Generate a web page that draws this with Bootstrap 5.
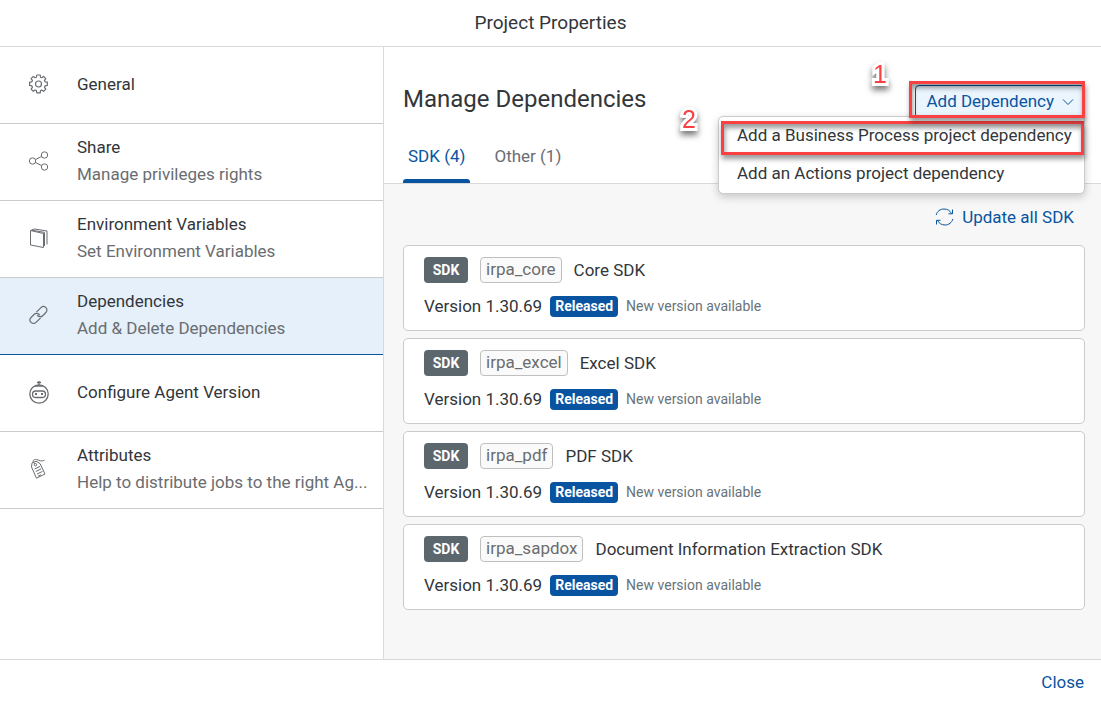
<!DOCTYPE html>
<html lang="en">
<head>
<meta charset="utf-8">
<meta name="viewport" content="width=device-width, initial-scale=1">
<title>Project Properties</title>
<link href="https://cdn.jsdelivr.net/npm/bootstrap@5.3.0/dist/css/bootstrap.min.css" rel="stylesheet">
<style>
:root { --ink: #32363a; --muted: #6a6d70; --brand: #0854a0; --line: #c9cbcc; }
body { font-family: Roboto, "Liberation Sans", sans-serif; font-size: 17px; line-height: 27px; color: var(--ink); }
.dialog-title { font-size: 19px; line-height: 46px; border-bottom: 1px solid #d9d9d9; font-weight: 400; }
.side { width: 384px; border-right: 1px solid #d9d9d9; }
.side-item { height: 77px; padding: 0 12px 2px 28px; gap: 28px; border-bottom: 1px solid var(--line); color: var(--ink); text-decoration: none; }
.side-item.current { background: #e5f0fa; border-bottom-color: var(--brand); }
.side-item svg { width: 21px; height: 24px; }
svg { fill: none; stroke: var(--muted); stroke-width: 1; flex: none; }
.soft { color: var(--muted); }
.content { background: #f7f7f7; }
.content-head { background: #fff; padding: 38px 16px 0 19px; border-bottom: 1px solid #d9d9d9; }
.page-title { font-size: 24px; line-height: 28px; font-weight: 400; }
.btn-add { height: 33px; padding: 0 10px; font-size: 17px; line-height: 31px; color: var(--brand); background: #ebf5fe; border: 1px solid var(--brand); border-radius: 4px; }
.btn-add svg, .btn-plain svg { stroke: var(--brand); }
.btn-plain { font-size: 17px; line-height: 24px; color: var(--brand); border: 0; padding: 0; }
.menu-add { top: 100%; right: 0; width: 367px; padding: 0; border: 1px solid var(--line); border-radius: 5px; box-shadow: 0 3px 8px rgba(0,0,0,.2); font-size: 17px; margin-top: -2px; }
.menu-add .dropdown-item { height: 38px; padding: 0 18px; line-height: 36px; color: var(--ink); }
.callout-box { position: absolute; border: 3px solid #f94144; box-shadow: 1px 4px 5px rgba(0,0,0,.4), inset 1px 4px 5px rgba(0,0,0,.4); pointer-events: none; z-index: 1001; }
.box-one { inset: -4px 0 0 -6px; }
.box-two { inset: 4px 0 auto 2px; height: 34px; }
.callout-num { position: absolute; font: 25px/28px "Liberation Sans", sans-serif; color: #f94144; -webkit-text-stroke: 6px #fff; paint-order: stroke fill; filter: drop-shadow(0 4px 3px rgba(0,0,0,.55)); }
.num-one { right: 198px; top: -25px; }
.num-two { right: 389px; top: 20px; }
.tab-row { gap: 19px; margin-top: 21px; }
.tab-btn { height: 44px; padding: 0 5px 10px; border: 0; background: none; color: var(--muted); position: relative; }
.tab-btn.active { color: var(--brand); }
.tab-btn.active::after { content: ""; position: absolute; left: 0; right: 0; bottom: 0; height: 4px; background: var(--brand); border-radius: 3px 3px 0 0; }
.content-list { padding: 21px 16px 22px 19px; }
.update-row { padding-right: 11px; }
.sdk-list { gap: 7px; margin-top: 16px; }
.sdk-card { padding: 11px 20px 13px; border: 1px solid var(--line); border-radius: 5px; background: #fff; gap: 13px; }
.tag-sdk { width: 44px; height: 26px; background: #5b676d; color: #fff; border-radius: 4px; font-weight: 700; font-size: 14px; line-height: 26px; text-align: center; }
.tag-id { height: 26px; padding: 0 5px; border: 1px solid #bfbfbf; border-radius: 4px; background: #fafafa; color: var(--muted); line-height: 22px; }
.line-one { gap: 12px; height: 26px; }
.line-two { gap: 8px; height: 21px; }
.tag-rel { height: 21px; padding: 0 5px; background: var(--brand); color: #fff; border-radius: 4px; font-size: 14px; line-height: 21px; font-weight: 700; }
.note { font-size: 14px; color: #687379; }
.foot { height: 44px; border-top: 1px solid #d9d9d9; padding: 0 17px; }
</style>
</head>
<body>
<div class="d-flex flex-column min-vh-100">
  <h1 class="dialog-title text-center m-0">Project Properties</h1>
  <div class="d-flex flex-grow-1">
    <nav class="side flex-shrink-0" aria-label="Project properties">
      <a href="#" class="side-item d-flex align-items-center">
        <svg viewBox="0 0 21 24"><path d="M8.800 3h3.400l.3 2.200 1.300.5 1.800-1.300 2.200 2.200-1.300 1.800.6 1.400 2.200.4v3.200l-2.200.4-.6 1.500 1.300 1.800-2.200 2.200-1.800-1.300-1.300.6-.3 2.200H8.800l-.4-2.200-1.300-.6-1.800 1.300-2.200-2.200 1.300-1.800-.6-1.500-2.200-.4v-3.200l2.200-.4.6-1.400-1.300-1.800 2.200-2.200 1.800 1.300 1.300-.5z" stroke-width="1.200" stroke-linejoin="round"/><circle cx="10.500" cy="12" r="3" stroke-width="1.200"/></svg>
        <span>General</span></a>
      <a href="#" class="side-item d-flex align-items-center">
        <svg viewBox="0 0 21 24" stroke-width="1.200"><circle cx="4.500" cy="12" r="3.200"/><circle cx="16.500" cy="6" r="3.200"/><circle cx="16.500" cy="18" r="3.200"/><path d="M7.400 10.600l6.200-3.200M7.400 13.400l6.200 3.200"/></svg>
        <span>Share<br><span class="soft">Manage privileges rights</span></span></a>
      <a href="#" class="side-item d-flex align-items-center">
        <svg viewBox="0 0 21 24"><path d="M2.500 4.500v14.500l13 2.500v-14zM2.500 4.500l4-1.500 12.500 2v13.500M4 4.200l12.500 2.200V20"/></svg>
        <span>Environment Variables<br><span class="soft">Set Environment Variables</span></span></a>
      <a href="#" class="side-item current d-flex align-items-center" aria-current="page">
        <svg viewBox="0 0 21 24"><g transform="rotate(-45 10.500 12)" stroke-width="1.200"><path d="M10 15.500H3.500a3.500 3.500 0 0 1 0-7H8a3.500 3.500 0 0 1 3.300 4.500"/><path d="M11 8.500h6.500a3.500 3.500 0 0 1 0 7H13a3.500 3.500 0 0 1-3.300-4.500"/></g></svg>
        <span>Dependencies<br><span class="soft">Add &amp; Delete Dependencies</span></span></a>
      <a href="#" class="side-item d-flex align-items-center">
        <svg viewBox="0 0 21 24"><circle cx="11" cy="14" r="9.200" stroke-width="1.300"/><path d="M11 1v4M9 2.500h4M7 6h8" stroke-width="1.300"/><rect x="4.500" y="11" width="13" height="6.500" rx="3.200" stroke-width="1.300"/><path d="M7 14h2M13 14h2" stroke-width="2"/></svg>
        <span>Configure Agent Version</span></a>
      <a href="#" class="side-item d-flex align-items-center">
        <svg viewBox="0 0 21 24" stroke-width="1.100"><path d="M3.500 10l.5-4 4-1.800 4 2.300 5 10.500-8.500 4.200zM7 6.800C3.500 4 5.500 2 8.500 2.600c3 .6 5 2.400 8 .6M6.500 12l5.500-2.600M7.700 14.500l5.500-2.600M9 17l5.500-2.600M10 19.200l3-1.400"/><circle cx="7.500" cy="7.700" r="1.200"/></svg>
        <span>Attributes<br><span class="soft text-nowrap">Help to distribute jobs to the right Ag...</span></span></a>
    </nav>
    <main class="content flex-grow-1">
      <header class="content-head">
        <div class="d-flex justify-content-between">
          <h2 class="page-title m-0">Manage Dependencies</h2>
          <div class="dropdown">
            <button type="button" class="btn-add d-flex align-items-center gap-2" aria-expanded="true">Add Dependency
              <svg width="12" height="8" viewBox="0 0 12 8"><path d="M1 1.500l5 5 5-5"/></svg></button>
            <span class="callout-box box-one"></span>
            <span class="callout-num num-one">1</span>
            <span class="callout-num num-two">2</span>
            <div class="dropdown-menu menu-add show">
              <a class="dropdown-item" href="#">Add a Business Process project dependency</a>
              <a class="dropdown-item" href="#">Add an Actions project dependency</a>
              <span class="callout-box box-two"></span>
            </div>
          </div>
        </div>
        <div class="tab-row d-flex" role="tablist">
          <button type="button" class="tab-btn active" role="tab" aria-selected="true">SDK (4)</button>
          <button type="button" class="tab-btn" role="tab" aria-selected="false">Other (1)</button>
        </div>
      </header>
      <section class="content-list">
        <div class="update-row d-flex justify-content-end">
          <button type="button" class="btn btn-plain d-flex align-items-center gap-2">
            <svg width="19" height="20" viewBox="0 0 19 20" stroke-width="1.200"><path d="M1.200 8C2 4.500 5 2 9 2c3.300 0 6 1.500 7.500 4.500M17.500 2.500v4.300h-4M17.800 12c-.8 3.500-4 6-7.800 6-3.300 0-6-1.700-7.500-4.500M1.500 17.500v-4.200h4"/></svg>Update all SDK</button>
        </div>
        <div class="sdk-list d-flex flex-column">
          <article class="sdk-card d-flex flex-column">
            <div class="line-one d-flex align-items-center"><span class="tag-sdk">SDK</span><span class="tag-id">irpa_core</span><span>Core SDK</span></div>
            <div class="line-two d-flex align-items-center"><span>Version 1.30.69</span><span class="tag-rel">Released</span><span class="note">New version available</span></div>
          </article>
          <article class="sdk-card d-flex flex-column">
            <div class="line-one d-flex align-items-center"><span class="tag-sdk">SDK</span><span class="tag-id">irpa_excel</span><span>Excel SDK</span></div>
            <div class="line-two d-flex align-items-center"><span>Version 1.30.69</span><span class="tag-rel">Released</span><span class="note">New version available</span></div>
          </article>
          <article class="sdk-card d-flex flex-column">
            <div class="line-one d-flex align-items-center"><span class="tag-sdk">SDK</span><span class="tag-id">irpa_pdf</span><span>PDF SDK</span></div>
            <div class="line-two d-flex align-items-center"><span>Version 1.30.69</span><span class="tag-rel">Released</span><span class="note">New version available</span></div>
          </article>
          <article class="sdk-card d-flex flex-column">
            <div class="line-one d-flex align-items-center"><span class="tag-sdk">SDK</span><span class="tag-id">irpa_sapdox</span><span>Document Information Extraction SDK</span></div>
            <div class="line-two d-flex align-items-center"><span>Version 1.30.69</span><span class="tag-rel">Released</span><span class="note">New version available</span></div>
          </article>
        </div>
      </section>
    </main>
  </div>
  <footer class="foot d-flex align-items-center justify-content-end">
    <button type="button" class="btn btn-plain">Close</button>
  </footer>
</div>
<script src="https://cdn.jsdelivr.net/npm/bootstrap@5.3.0/dist/js/bootstrap.bundle.min.js"></script>
</body>
</html>
